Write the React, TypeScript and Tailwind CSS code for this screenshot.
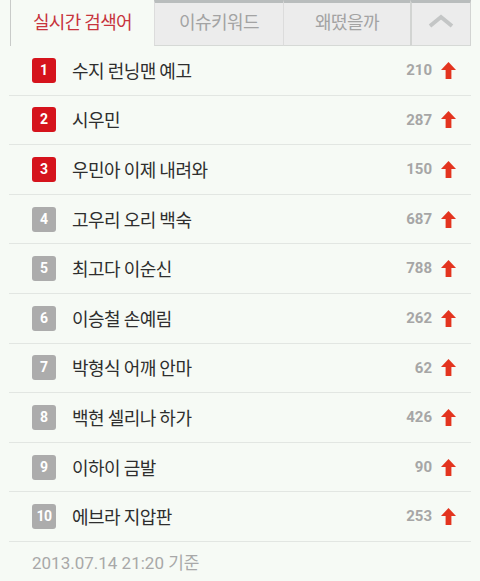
import React from "react";

const items: { name: string; count: number }[] = [
  { name: "수지 런닝맨 예고", count: 210 },
  { name: "시우민", count: 287 },
  { name: "우민아 이제 내려와", count: 150 },
  { name: "고우리 오리 백숙", count: 687 },
  { name: "최고다 이순신", count: 788 },
  { name: "이승철 손예림", count: 262 },
  { name: "박형식 어깨 안마", count: 62 },
  { name: "백현 셀리나 하가", count: 426 },
  { name: "이하이 금발", count: 90 },
  { name: "에브라 지압판", count: 253 },
];

const font = {
  fontFamily: '"Noto Sans CJK KR", "Noto Sans", Roboto, sans-serif',
};

function UpArrow() {
  return (
    <svg width="15" height="17" viewBox="0 0 15 17" className="block">
      <polygon points="7.5,0 15,8 10.4,8 10.4,17 4.6,17 4.6,8 0,8" fill="#e3341f" />
    </svg>
  );
}

function Chevron() {
  return (
    <svg width="28" height="14" viewBox="0 0 28 14" className="block">
      <polyline points="3,12 14,3 25,12" fill="none" stroke="#c4c6c6" strokeWidth="4" strokeLinejoin="miter" />
    </svg>
  );
}

export default function App() {
  return (
    <div className="w-[480px] h-[581px] bg-[#f6faf5] overflow-hidden" style={font}>
      <div className="flex h-[46px] pl-[10px] pr-[9px]">
        <div className="w-[144px] border-l border-[#c9cbc9] flex items-center justify-center text-[18px] tracking-[-0.6px] text-[#c7343d] pb-[4px]">
          실시간 검색어
        </div>
        <div className="w-[129px] bg-[#ececec] border-t-[3px] border-t-[#b9bdbd] border-b border-b-[#d6d9d6] border-l border-l-[#dcdcdc] flex items-center justify-center text-[18px] tracking-[-0.6px] text-[#a3a3a3] pb-[5px]">
          이슈키워드
        </div>
        <div className="w-[127px] bg-[#ececec] border-t-[3px] border-t-[#b9bdbd] border-b border-b-[#d6d9d6] border-l border-l-[#dcdcdc] flex items-center justify-center text-[18px] tracking-[-0.6px] text-[#a3a3a3] pb-[5px]">
          왜떴을까
        </div>
        <div className="w-[61px] bg-[#ececec] border-t-[3px] border-t-[#b9bdbd] border-b border-b-[#d6d9d6] border-l-2 border-l-[#d2d4d2] border-r border-r-[#d2d4d2] flex items-center justify-center pb-[6px]">
          <Chevron />
        </div>
      </div>
      <div className="mx-[9px] w-[462px]">
        {items.map((it, i) => (
          <div
            key={i}
            className="h-[49.6px] border-b border-[#e2e6e2] flex items-center pl-[23px] pr-[15px]"
          >
            <div
              className={
                "w-[24px] h-[25px] rounded-[3px] flex items-center justify-center text-white font-bold text-[14px] " +
                (i < 3 ? "bg-[#d5131c]" : "bg-[#acacac]")
              }
              style={{ fontFamily: 'Roboto, "Liberation Sans", sans-serif', letterSpacing: i === 9 ? "-0.5px" : undefined }}
            >
              {i + 1}
            </div>
            <div className="ml-[16px] text-[18px] tracking-[-0.5px] text-[#2e2e2e] flex-1">{it.name}</div>
            <div
              className="text-[15px] font-bold text-[#a6a6a6] mr-[9px]"
              style={{ fontFamily: 'Roboto, "Liberation Sans", sans-serif' }}
            >
              {it.count}
            </div>
            <UpArrow />
          </div>
        ))}
      </div>
      <div
        className="pl-[32px] pt-[9px] text-[17px] text-[#a8a8a8]"
        style={{ fontFamily: 'Roboto, "Noto Sans CJK KR", sans-serif' }}
      >
        2013.07.14 21:20 기준
      </div>
    </div>
  );
}
